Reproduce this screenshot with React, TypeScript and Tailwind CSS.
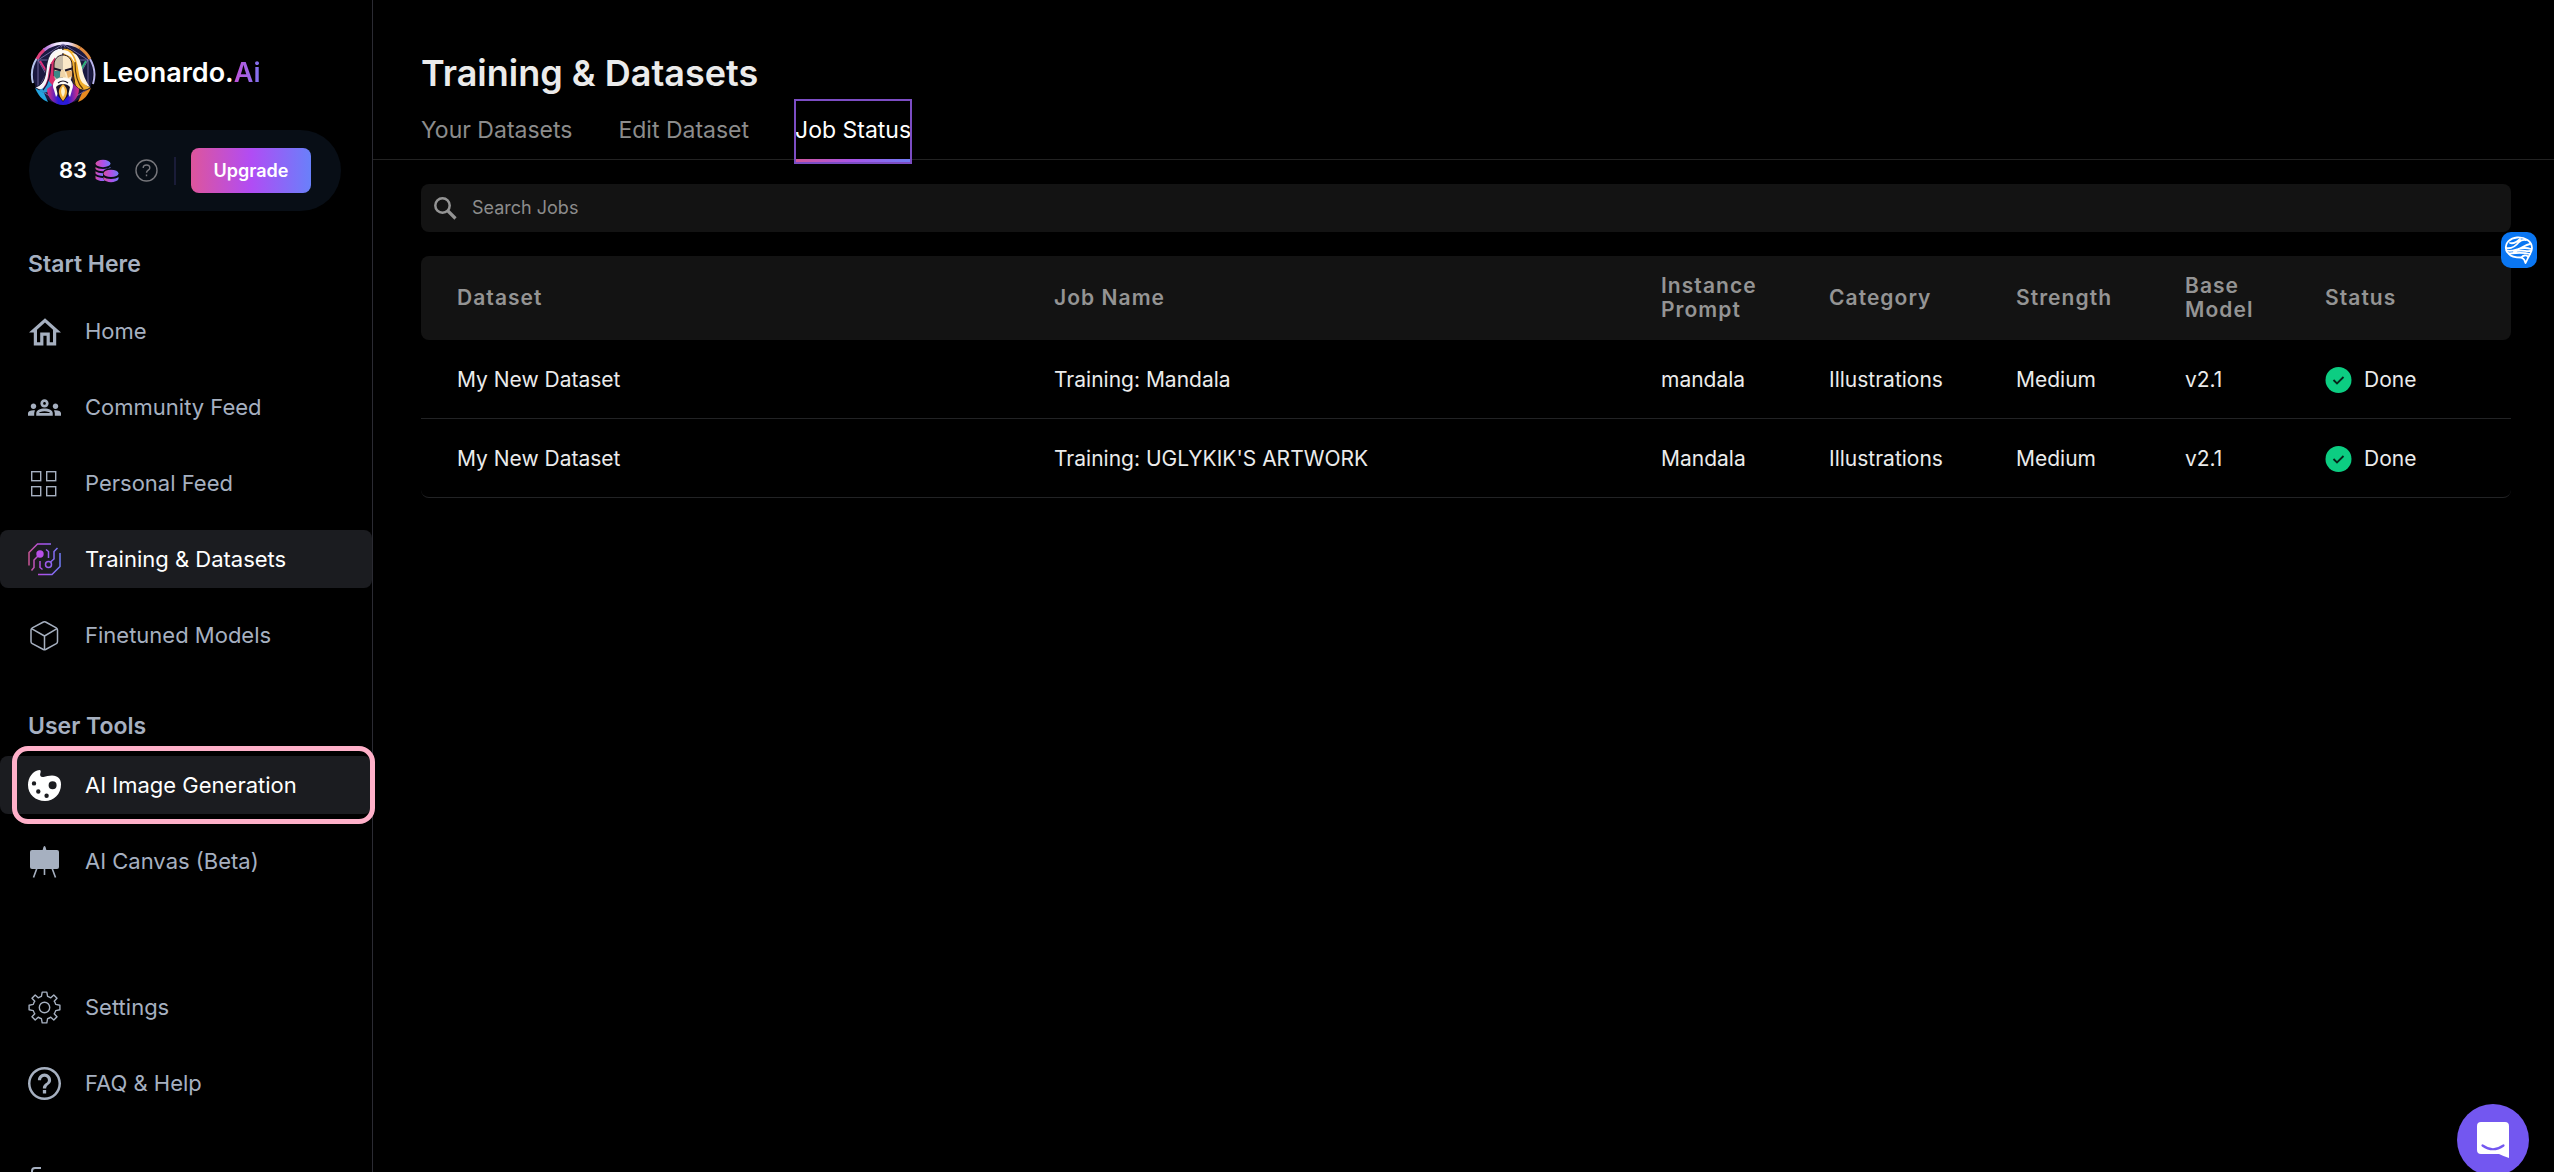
import { useState } from 'react';
import type { ReactNode } from 'react';

const jobs = [
  { id: 1, dataset: 'My New Dataset', name: 'Training: Mandala', prompt: 'mandala', category: 'Illustrations', strength: 'Medium', model: 'v2.1', status: 'Done' },
  { id: 2, dataset: 'My New Dataset', name: "Training: UGLYKIK'S ARTWORK", prompt: 'Mandala', category: 'Illustrations', strength: 'Medium', model: 'v2.1', status: 'Done' },
];

const columns = [
  { label: 'Dataset', width: 'w-[597px]' },
  { label: 'Job Name', width: '' },
  { label: 'Instance Prompt', width: 'w-[168px]' },
  { label: 'Category', width: 'w-[187px]' },
  { label: 'Strength', width: 'w-[169px]' },
  { label: 'Base Model', width: 'w-[140px]' },
  { label: 'Status', width: 'w-[222px]' },
];

const tabs = ['Your Datasets', 'Edit Dataset', 'Job Status'];

function Logo() {
  return (
    <svg className="w-[66px] h-[66px] shrink-0" viewBox="0 0 66 66" fill="none">
      <defs>
        <linearGradient id="ring" x1="0" y1="0" x2="1" y2="0">
          <stop offset="0" stopColor="#b06ad8" />
          <stop offset="0.35" stopColor="#f3ecff" />
          <stop offset="0.7" stopColor="#e6dcff" />
          <stop offset="1" stopColor="#e8973a" />
        </linearGradient>
        <linearGradient id="robe" x1="0" y1="0" x2="1" y2="0">
          <stop offset="0" stopColor="#e0307c" />
          <stop offset="0.35" stopColor="#2a1ad8" />
          <stop offset="0.65" stopColor="#2a1ad8" />
          <stop offset="1" stopColor="#e0307c" />
        </linearGradient>
      </defs>
      <circle cx="33" cy="34" r="30" fill="#1a1940" />
      <path d="M3 43A31 31 0 0 1 7 18" stroke="#b4c4ec" strokeWidth="2" />
      <path d="M7 19A31 31 0 0 1 15 9" stroke="#e0407c" strokeWidth="3" />
      <path d="M14 10A31 31 0 0 1 50 8" stroke="url(#ring)" strokeWidth="3" />
      <path d="M50 8A31 31 0 0 1 60 19" stroke="#e08a40" strokeWidth="3" />
      <path d="M60 19A31 31 0 0 1 63 44" stroke="#b9b4ec" strokeWidth="2" />
      <path d="M33 4L58 20V49L33 64L8 49V20ZM8 20H58L33 64L8 20M8 49L33 4L58 49" stroke="#8478b4" strokeWidth="0.8" />
      <path d="M10 21L17 32" stroke="#e0307c" strokeWidth="2" />
      <path d="M56 21L50 31" stroke="#2fb07c" strokeWidth="2" />
      {/* hair */}
      <path d="M33 8C20 8 17 19 16 30C15 41 11 46 5 47C10 52 17 51 20 45L24 26L33 15Z" fill="#f4f4fb" stroke="#14102c" strokeWidth="1" />
      <path d="M25 17C20 21 19 29 18 36C17 43 14 47 12 50C17 53 22 50 25 44Z" fill="#d8306c" />
      <path d="M18 40C17 46 13 49 9 50C14 55 20 52 23 46Z" fill="#2b9ad8" />
      <path d="M33 8C46 8 49 19 50 30C51 41 55 46 61 47C56 52 49 51 45 45L42 26L33 15Z" fill="#f0ae2c" stroke="#14102c" strokeWidth="1" />
      <path d="M42 13C47 18 48 28 49 34C50 41 53 45 60 47C55 40 53 34 52 28C50 17 46 13 42 13Z" fill="#fff4dc" />
      <path d="M45 22C45 35 47 43 53 49M42 26C42 36 43 42 46 47" stroke="#5a3408" strokeWidth="1.2" />
      <path d="M21 24C20 36 19 43 13 50" stroke="#1c1438" strokeWidth="1.2" />
      <path d="M20 24C22 14 27 10 33 10C39 10 43 14 45 23L41 17L33 13L25 17Z" fill="#fffaf0" />
      {/* robe */}
      <path d="M17 49L25 43H42L49 49C49 58 42 65 33 65C24 65 17 58 17 49Z" fill="url(#robe)" />
      <path d="M5 48C8 55 12 60 18 62L14 53Z" fill="#24a5e0" />
      <path d="M61 48C58 55 54 60 48 62L52 53Z" fill="#e88a20" />
      {/* face */}
      <path d="M24 23C26 17 29 15 33 15V46C28 46 24 40 24 34Z" fill="#c8bca8" />
      <path d="M42 23C40 17 37 15 33 15V46C38 46 42 40 42 34Z" fill="#fbe9c8" />
      <path d="M33 15C28 15 24 19 24 25V36M33 15C38 15 42 19 42 25V36" stroke="#2a1a20" strokeWidth="1" />
      <path d="M24 31H30V37L27 39L24 36Z" fill="#3b8a86" />
      <path d="M36 31H42V36L38 38Z" fill="#e8b068" />
      <path d="M24 28.500L31 30.500M42 28.500L35 30.500" stroke="#1b1426" strokeWidth="2" />
      <path d="M31 30L30 37H36L34 30" fill="#f0d4a8" />
      <path d="M24 50C21 43 25 37 33 38C41 37 45 43 42 50L40 57L36 50H30L26 57Z" fill="#fdfbf8" />
      <path d="M28 43Q33 39 38 43" stroke="#1b1426" strokeWidth="1.200" />
      <path d="M26 47C29 43 37 43 40 47L38 56L33 62L28 56Z" fill="#1b1426" />
      <path d="M33 44C39 49 38 55 33 61C28 55 27 49 33 44Z" fill="#f4b03a" />
      <path d="M33 46C36 50 35 54 33 57C31 54 30 50 33 46Z" fill="#fff2cc" />
    </svg>
  );
}

function CoinsIcon() {
  return (
    <svg className="w-6 h-6" viewBox="0 0 24 24" fill="none">
      <defs>
        <linearGradient id="coins" x1="0" y1="0" x2="1" y2="0">
          <stop offset="0" stopColor="#d44f9f" />
          <stop offset="0.5" stopColor="#b04fea" />
          <stop offset="1" stopColor="#6f7df8" />
        </linearGradient>
      </defs>
      <g fill="url(#coins)">
        <ellipse cx="8" cy="4.5" rx="7.5" ry="3.7" />
        <path d="M0.5 8C3 10.5 13 10.5 15.5 8V9C12 9.5 9 10.5 8.3 12.2C4 12.3 1.5 11.3 0.5 10Z" />
        <path d="M0.5 12.3C2 13.6 5 14.2 8 14.2V17C4.5 16.9 1.5 16 0.5 14.6Z" />
        <path d="M0.5 16.8C2 18.2 5 18.8 8 18.9L9.6 22C5 22.3 1.5 21 0.5 19.4Z" />
        <ellipse cx="16" cy="14.4" rx="7.5" ry="3.7" />
        <path d="M8.5 18C11 20.6 21 20.6 23.5 18V20C21.5 24.2 10.5 24.2 8.5 20Z" />
      </g>
    </svg>
  );
}

function HomeIcon() {
  return (
    <svg className="w-8 h-8" viewBox="2 1 20 20" fill="currentColor">
      <path d="M12 5.69l5 4.5V18h-2v-6H9v6H7v-7.81l5-4.5M12 3L2 12h3v8h6v-6h2v6h6v-8h3L12 3z" />
    </svg>
  );
}

function GroupsIcon() {
  return (
    <svg className="w-[33px] h-[33px]" viewBox="0 0 24 24" fill="currentColor">
      <path d="M4 13c1.1 0 2-.9 2-2s-.9-2-2-2-2 .9-2 2 .9 2 2 2zm1.13 1.1C4.76 14.04 4.39 14 4 14c-.99 0-1.93.21-2.78.58C.48 14.9 0 15.62 0 16.43V18h4.5v-1.61c0-.83.23-1.61.63-2.29zM20 13c1.1 0 2-.9 2-2s-.9-2-2-2-2 .9-2 2 .9 2 2 2zm4 3.43c0-.81-.48-1.53-1.22-1.85-.85-.37-1.79-.58-2.78-.58-.39 0-.76.04-1.13.1.4.68.63 1.46.63 2.29V18H24v-1.57zM16.24 13.65c-1.17-.52-2.61-.9-4.24-.9s-3.07.39-4.24.9C6.68 14.13 6 15.21 6 16.39V18h12v-1.61c0-1.18-.68-2.26-1.76-2.74zM8.07 16c.09-.23.13-.39.91-.69.97-.38 1.99-.56 3.02-.56s2.05.18 3.02.56c.77.3.81.46.91.69H8.07zM12 8c.55 0 1 .45 1 1s-.45 1-1 1-1-.45-1-1 .45-1 1-1m0-2c-1.66 0-3 1.34-3 3s1.34 3 3 3 3-1.34 3-3-1.34-3-3-3z" />
    </svg>
  );
}

function SquaresIcon() {
  return (
    <svg className="w-[33px] h-[33px]" viewBox="0 0 33 33" fill="none" stroke="currentColor" strokeWidth="1.4">
      <rect x="3.7" y="4.7" width="9" height="9" />
      <rect x="18.7" y="4.7" width="9" height="9" />
      <rect x="3.7" y="19.7" width="9" height="9" />
      <rect x="18.7" y="19.7" width="9" height="9" />
    </svg>
  );
}

function CircuitIcon() {
  return (
    <svg className="w-[33px] h-[33px]" viewBox="0 0 33 33" fill="none">
      <defs>
        <linearGradient id="circuit" gradientUnits="userSpaceOnUse" x1="0" y1="0" x2="33" y2="0">
          <stop offset="0" stopColor="#c9568f" />
          <stop offset="0.4" stopColor="#b04fea" />
          <stop offset="1" stopColor="#6f7df8" />
        </linearGradient>
      </defs>
      <g stroke="url(#circuit)" strokeWidth="1.5">
        <path d="M1 22.500V9.500L9.500 1H23" />
        <path d="M10 31.500H24L32 23.500V10" />
        <path d="M29.500 5L26 8.500V16L22.500 19" />
        <circle cx="20.500" cy="21.500" r="3" />
        <path d="M10 13L6 17V24.500L3.500 27.500" />
        <path d="M18 6.500L20.500 8.500V15" />
        <path d="M12 18V24.500L14.500 26.500" />
      </g>
      <circle cx="12" cy="11" r="3.700" fill="#b850e8" />
    </svg>
  );
}

function CubeIcon() {
  return (
    <svg className="w-[33px] h-[33px]" viewBox="0 0 33 33" fill="none" stroke="currentColor" strokeWidth="1.5" strokeLinejoin="round">
      <path d="M15.400 3L4.300 8.800Q3 9.500 3 11V22.500Q3 24 4.300 24.700L15.400 30.500Q16.500 31 17.600 30.500L28.300 24.700Q29.500 24 29.500 22.500V11Q29.500 9.500 28.300 8.800L17.600 3Q16.500 2.500 15.400 3Z" />
      <path d="M3.500 9.700L16.500 17L29 9.700M16.500 17V30.500" />
    </svg>
  );
}

function PaletteIcon() {
  return (
    <svg className="w-[33px] h-[33px]" viewBox="0 0 33 33">
      <path
        fill="currentColor"
        fillRule="evenodd"
        d="M11.500 1C12.800 1.200 13 2.500 12.400 4C11.500 6.500 12.800 8.500 15.500 8C18 7.500 21 6.500 24 6.500C30 6.500 33 10 33 15.500C33 25 26 32 17 32C7.500 32 0 25.500 0 16C0 8.500 5 1.500 11.500 1ZM6 12.200A2.200 2.200 0 1 0 6 16.600A2.200 2.200 0 1 0 6 12.200ZM10.300 20.300A2.200 2.200 0 1 0 10.300 24.700A2.200 2.200 0 1 0 10.300 20.300ZM18.600 24.500A2.200 2.200 0 1 0 18.600 28.900A2.200 2.200 0 1 0 18.600 24.500ZM24.600 12.200A4 4 0 1 0 24.600 20.200A4 4 0 1 0 24.600 12.200Z"
      />
    </svg>
  );
}

function EaselIcon() {
  return (
    <svg className="w-[33px] h-[33px]" viewBox="0 0 33 33" fill="currentColor">
      <rect x="2" y="5" width="29" height="19" rx="2" />
      <path d="M14.500 5.500L15.500 2Q16.500 0 17.500 2L18.500 5.500Z" />
      <path d="M9 23L5.500 32.500M24 23L27.500 32.500M16.500 23V30" stroke="currentColor" strokeWidth="1.600" />
    </svg>
  );
}

function GearIcon() {
  return (
    <svg className="w-[33px] h-[33px]" viewBox="-16.500 -16.500 33 33" fill="none" stroke="currentColor" strokeWidth="1.400" strokeLinejoin="round">
      <path d="M-2.3 -15.4H2.3L3.1 -11.2Q5 -10.600 6.300 -9.700L9.300 -12.500L12.500 -9.300L9.700 -6.300Q10.600 -5 11.200 -3.100L15.400 -2.300V2.300L11.200 3.100Q10.600 5 9.700 6.300L12.500 9.300L9.300 12.500L6.300 9.700Q5 10.600 3.100 11.200L2.300 15.400H-2.300L-3.100 11.200Q-5 10.600 -6.300 9.700L-9.300 12.500L-12.500 9.300L-9.700 6.300Q-10.600 5 -11.200 3.100L-15.400 2.300V-2.300L-11.200 -3.100Q-10.600 -5 -9.700 -6.300L-12.500 -9.300L-9.300 -12.500L-6.300 -9.700Q-5 -10.600 -3.100 -11.200Z" />
      <circle r="5.200" />
    </svg>
  );
}

function HelpIcon() {
  return (
    <svg className="w-[33px] h-[33px]" viewBox="2 2 20 20" fill="currentColor">
      <path d="M11 18h2v-2h-2v2zm1-16C6.480 2 2 6.480 2 12s4.480 10 10 10 10-4.480 10-10S17.520 2 12 2zm0 18.500c-4.690 0-8.500-3.810-8.500-8.500s3.810-8.500 8.500-8.500 8.500 3.810 8.500 8.500-3.810 8.500-8.500 8.500zm0-14.500c-2.210 0-4 1.790-4 4h1.900c0-1.160.94-2.100 2.100-2.100s2.100.94 2.100 2.100c0 2-3.100 1.750-3.100 5h2c0-2.250 3-2.500 3-5 0-2.210-1.790-4-4-4z" />
    </svg>
  );
}

function LogoutIcon() {
  return (
    <svg className="w-[33px] h-[33px]" viewBox="0 0 33 33" fill="none" stroke="currentColor" strokeWidth="2">
      <path d="M13 4H7Q4 4 4 7V26Q4 29 7 29H13M12 16.500H29M22 9L29 16.500L22 24" />
    </svg>
  );
}

type NavItemProps = {
  icon: ReactNode;
  label: string;
  active?: boolean;
  highlighted?: boolean;
};

function NavItem({ icon, label, active, highlighted }: NavItemProps) {
  return (
    <li className="relative">
      <a
        href="#"
        className={`flex items-center h-[58px] pl-7 rounded-lg text-[22px] ${
          active ? 'bg-[#1b1c20] text-white' : 'text-[#a6b0c0]'
        }`}
      >
        <span className="w-[33px] mr-6 flex justify-center shrink-0">{icon}</span>
        {label}
      </a>
      {highlighted && (
        <span className="absolute left-3 -right-[3px] -inset-y-[10px] border-[5px] border-[#ffb0c9] rounded-2xl pointer-events-none z-10" />
      )}
    </li>
  );
}

function Sidebar() {
  return (
    <aside className="w-[373px] shrink-0 border-r border-[#2b2b33] pt-10">
      <a href="#" className="flex items-center gap-1.5 pl-[30px] text-[27px] leading-[64px] font-semibold text-white">
        <Logo />
        <span>
          Leonardo.
          <span className="bg-gradient-to-r from-[#c04fd8] to-[#7a72f0] bg-clip-text text-transparent">Ai</span>
        </span>
      </a>

      <div className="flex items-center h-[81px] mt-6 ml-[29px] mr-[31px] pl-[30px] pr-[30px] rounded-full bg-[#080e16]">
        <span className="text-[22px] font-semibold text-white mr-2">83</span>
        <CoinsIcon />
        <button className="ml-4" aria-label="Token info">
          <svg className="w-[23px] h-[23px] text-[#77777c]" viewBox="0 0 23 23" fill="none" stroke="currentColor" strokeWidth="1.400">
            <circle cx="11.500" cy="11.500" r="10.500" />
            <path d="M8.200 9Q8.200 6 11.500 6T14.800 9C14.800 11.200 11.500 11.200 11.500 13.700M11.500 15.500V17.200" />
          </svg>
        </button>
        <span className="w-0.5 h-7 bg-[#1a1c38] ml-4" />
        <button className="ml-auto w-[120px] h-[45px] rounded-lg bg-[linear-gradient(90deg,#dd559c,#b14cf4_50%,#6980fa)] text-lg font-semibold text-white">
          Upgrade
        </button>
      </div>

      <h2 className="mt-[39px] ml-7 text-[23px] leading-7 font-semibold text-[#a6b0c0]">Start Here</h2>
      <ul className="mt-6 flex flex-col gap-[18px]">
        <NavItem icon={<HomeIcon />} label="Home" />
        <NavItem icon={<GroupsIcon />} label="Community Feed" />
        <NavItem icon={<SquaresIcon />} label="Personal Feed" />
        <NavItem icon={<CircuitIcon />} label="Training & Datasets" active />
        <NavItem icon={<CubeIcon />} label="Finetuned Models" />
      </ul>

      <h2 className="mt-12 ml-7 text-[23px] leading-7 font-semibold text-[#a6b0c0]">User Tools</h2>
      <ul className="mt-4 flex flex-col gap-[18px]">
        <NavItem icon={<PaletteIcon />} label="AI Image Generation" active highlighted />
        <NavItem icon={<EaselIcon />} label="AI Canvas (Beta)" />
      </ul>

      <ul className="mt-[88px] flex flex-col gap-[18px]">
        <NavItem icon={<GearIcon />} label="Settings" />
        <NavItem icon={<HelpIcon />} label="FAQ & Help" />
      </ul>
      <a href="#" aria-label="Logout" className="flex mt-[52px] ml-7 text-[#a6b0c0]">
        <LogoutIcon />
      </a>
    </aside>
  );
}

function JobsTable({ searchTerm }: { searchTerm: string }) {
  const filtered = jobs.filter((job) => job.name.toLowerCase().includes(searchTerm.toLowerCase()));

  return (
    <table className="mt-6 w-full table-fixed border-separate border-spacing-0 text-left">
      <thead>
        <tr className="h-[84px]">
          {columns.map((col) => (
            <th
              key={col.label}
              className={`${col.width} pl-9 pr-6 bg-[#131313] text-[21px] leading-6 font-semibold tracking-wider text-[#949494] first:rounded-l-lg last:rounded-r-lg`}
            >
              {col.label}
            </th>
          ))}
        </tr>
      </thead>
      <tbody className="[&>tr:last-child>td:first-child]:rounded-bl-lg [&>tr:last-child>td:last-child]:rounded-br-lg">
        {filtered.map((job) => (
          <tr
            key={job.id}
            className="h-[79px] text-[21px] leading-7 text-[#ebebeb] *:pl-9 *:pt-0.5 *:border-b *:border-[#222325]"
          >
            <td>{job.dataset}</td>
            <td>{job.name}</td>
            <td>{job.prompt}</td>
            <td>{job.category}</td>
            <td>{job.strength}</td>
            <td>{job.model}</td>
            <td>
              <span className="flex items-center gap-3">
                <svg className="w-[27px] h-[27px]" viewBox="0 0 27 27" fill="none">
                  <circle cx="13.500" cy="13" r="13" fill="#0ccd82" />
                  <path d="M8.500 13L12 16.500L18.500 10" stroke="#06261a" strokeWidth="1.800" />
                </svg>
                {job.status}
              </span>
            </td>
          </tr>
        ))}
      </tbody>
    </table>
  );
}

function App() {
  const [activeTab, setActiveTab] = useState('Job Status');
  const [searchTerm, setSearchTerm] = useState('');

  return (
    <div className="flex h-screen overflow-hidden bg-black font-[Inter,sans-serif]">
      <Sidebar />

      <main className="flex-1 min-w-0">
        <header className="pl-12 pt-[51px] border-b border-[#222222]">
          <h1 className="text-[36px] leading-[44px] font-semibold text-[#ebebeb]">Training &amp; Datasets</h1>
          <nav className="flex gap-[46px] mt-[5px] -mb-1">
            {tabs.map((tab) => (
              <button
                key={tab}
                onClick={() => setActiveTab(tab)}
                className={`flex flex-col pt-0.5 text-[23px] leading-[57px] ${
                  activeTab === tab
                    ? 'text-white outline-2 -outline-offset-1 outline-[#7c4dc4]'
                    : 'text-[#8c8c8c]'
                }`}
              >
                {tab}
                <span
                  className={`w-full h-1 ${
                    activeTab === tab ? 'bg-[linear-gradient(90deg,#d0589c,#a855e8_50%,#6f7cf4)]' : ''
                  }`}
                />
              </button>
            ))}
          </nav>
        </header>

        <section className="pl-12 pr-[43px] pt-6">
          <label className="flex items-center h-12 pl-3 rounded-lg bg-[#131313]">
            <svg className="w-6 h-6 text-[#949494]" viewBox="0 0 24 24" fill="none" stroke="currentColor" strokeWidth="2.500">
              <circle cx="9.500" cy="9.500" r="7.200" />
              <path d="M14.500 14.500L22.500 22.500" strokeWidth="3.200" />
            </svg>
            <input
              type="text"
              aria-label="Search Jobs"
              placeholder="Search Jobs"
              className="ml-[15px] flex-1 bg-transparent outline-none text-lg text-white placeholder-[#8c8c8c]"
              value={searchTerm}
              onChange={(e) => setSearchTerm(e.target.value)}
            />
          </label>
          <JobsTable searchTerm={searchTerm} />
        </section>
      </main>

      {/* Floating widgets */}
      <button className="fixed right-[17px] top-[232px] w-9 h-9 rounded-[10px] bg-[#0a76f2]" aria-label="Assistant">
        <svg className="w-9 h-9" viewBox="0 0 36 36" fill="none" stroke="#fff" strokeWidth="1.800" strokeLinecap="round" strokeLinejoin="round">
          <path d="M5 17C4 11 9 6 16 5.500C24 5 31 9 31 16C31 20 29 22 28 24C26.500 26.500 26 28.500 24.500 31C24 28.500 23 26.500 20.500 25.500C15 25.500 10 25 8 22C6 20.500 5 19.500 5 17Z" />
          <path d="M5 16C10 17 14 15 18 10C20 8 22 7.500 25 8M9 11C13 12 16 10 19 7M5.500 18.500C14 21 18 13 30 17M8 21.500C15 21 22 20 29 22M17 17C21 16 24 13 29 12M13 20C20 17 25 20 29.500 19M20.500 25.500C22 23 25 23 27 24.500" />
        </svg>
      </button>
      <button className="fixed right-[25px] -bottom-1 w-[72px] h-[72px] rounded-full bg-[#7357f0] flex items-center justify-center" aria-label="Open chat">
        <svg className="w-8 h-9" viewBox="0 0 32 36">
          <path d="M4 0H28Q32 0 32 4V36Q26 34 22 32H4Q0 32 0 28V4Q0 0 4 0Z" fill="#fff" />
          <path d="M5.500 23.500Q16 31 26.500 23.500" stroke="#7357f0" strokeWidth="2.200" strokeLinecap="round" fill="none" />
        </svg>
      </button>
    </div>
  );
}

export default App;
